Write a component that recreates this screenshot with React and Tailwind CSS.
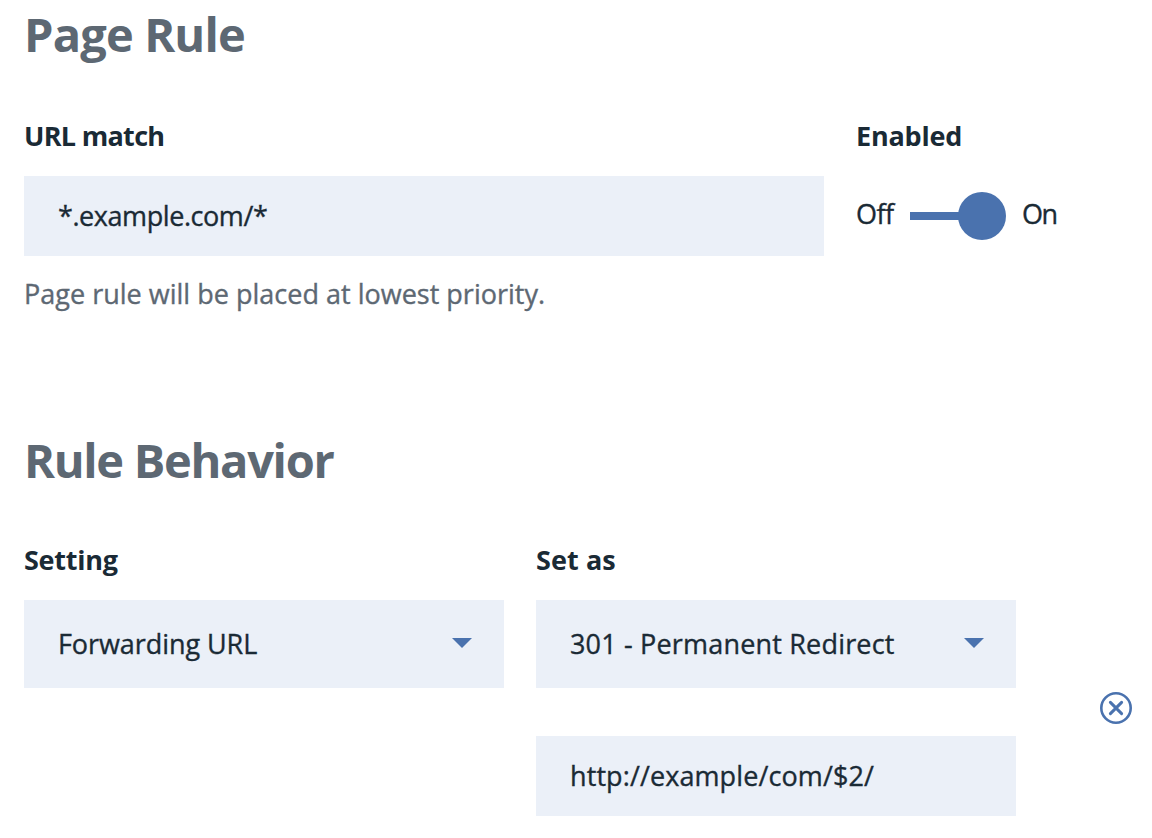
import React from "react";

function Title({ children, className }) {
  return (
    <h2 className="h-14 whitespace-nowrap text-[47px] leading-14 font-bold text-[#5d6873] [-webkit-text-stroke:0]">
      <span className={className}>{children}</span>
    </h2>
  );
}

function Label({ children, className }) {
  return (
    <div className="mb-6 h-8 whitespace-nowrap text-[27px] leading-8 font-bold [-webkit-text-stroke:0]">
      <span className={className}>{children}</span>
    </div>
  );
}

function Select({ children, className }) {
  return (
    <div className="flex h-22 w-[480px] items-center justify-between bg-[#ebf0f8] pr-8 pl-[34px]">
      <span className={className}>{children}</span>
      <svg width="20" height="10" viewBox="0 0 20 10" className="-mt-0.5" fill="#4a72ae">
        <path d="M0 0H20L10 10Z" />
      </svg>
    </div>
  );
}

export default function App() {
  return (
    <main className="h-[838px] w-[1152px] overflow-hidden bg-white pt-1.5 pl-6 font-['Open_Sans',sans-serif] text-[27px] leading-8 whitespace-nowrap text-[#1a2a35] [-webkit-text-stroke:0.35px]">
      <section className="h-[426px]">
        <Title className="tracking-[-0.85px]">Page Rule</Title>
        <div className="mt-[58px] flex gap-8">
          <div className="w-[800px]">
            <Label className="tracking-[-0.7px]">URL match</Label>
            <div className="flex h-20 items-center bg-[#ebf0f8] pl-[34px]">
              <span className="tracking-[-0.43px]">*.example.com/*</span>
            </div>
            <p className="mt-[22px] text-[#5d6873]">
              <span className="tracking-[0.01px]">Page rule will be placed at lowest priority.</span>
            </p>
          </div>
          <div>
            <Label className="tracking-[-0.2px]">Enabled</Label>
            <div className="flex h-20 items-center">
              <div className="w-[54px] pb-1">
                <span className="tracking-[-0.5px]">Off</span>
              </div>
              <div className="flex w-24 items-center">
                <div className="h-2 w-14 shrink-0 bg-[#4a72ae]" />
                <div className="-ml-2 size-12 shrink-0 rounded-full bg-[#4a72ae]" />
              </div>
              <div className="ml-4 pb-1">
                <span className="tracking-[-1.5px]">On</span>
              </div>
            </div>
          </div>
        </div>
      </section>
      <section>
        <Title className="tracking-[-1.3px]">Rule Behavior</Title>
        <div className="mt-14 flex gap-8">
          <div>
            <Label className="tracking-[-0.25px]">Setting</Label>
            <Select className="tracking-[-0.07px]">Forwarding URL</Select>
          </div>
          <div>
            <Label className="tracking-[0.1px]">Set as</Label>
            <Select className="tracking-[0.18px]">301 - Permanent Redirect</Select>
            <div className="mt-12 flex h-20 items-center bg-[#ebf0f8] pl-[34px]">
              <span className="tracking-[0.1px]">http://example/com/$2/</span>
            </div>
          </div>
          <div className="flex items-center pt-14 pl-[52px]">
            <svg width="32" height="32" viewBox="0 0 32 32" fill="none" stroke="#4a72ae">
              <circle cx="16" cy="16" r="14.7" strokeWidth="2.6" />
              <path d="M10.4 10.4L21.6 21.6M21.6 10.4L10.4 21.6" strokeWidth="3" strokeLinecap="round" />
            </svg>
          </div>
        </div>
      </section>
    </main>
  );
}
